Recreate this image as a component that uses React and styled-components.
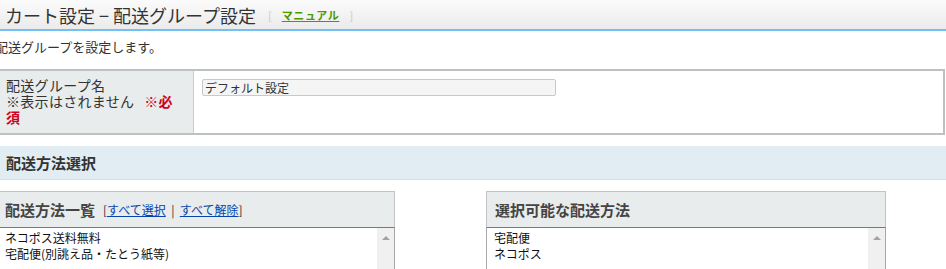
import React from "react";
import styled, { createGlobalStyle } from "styled-components";

const GlobalStyle = createGlobalStyle`
  html, body { margin: 0; padding: 0; background: #fff; overflow: hidden; }
  body { font-family: "Noto Sans CJK JP", "Noto Sans", sans-serif; color: #333; }
`;

const TitleBar = styled.div`
  height: 29px;
  border-bottom: 2px solid #72c0f4;
  background: linear-gradient(#fbfbfb, #ebebeb);
  display: flex;
  align-items: center;
  padding-left: 5px;
`;

const Title = styled.h1`
  margin: 0;
  font-size: 18px;
  font-weight: normal;
  color: #333;
  line-height: 22px;
  white-space: pre;
`;

const Manual = styled.span`
  margin-left: 12px;
  font-size: 11px;
  color: #c8c8c8;
  display: flex;
  align-items: center;
  gap: 10px;
  a {
    color: #4b9a00;
    font-weight: bold;
    text-decoration: underline;
    letter-spacing: 0.6px;
  }
`;

const Content = styled.div`
  margin-left: -5px;
  width: 951px;
`;

const Desc = styled.p`
  margin: 8px 0 14px;
  font-size: 13px;
  line-height: 16px;
`;

const FormTable = styled.div`
  width: 950px;
  box-sizing: border-box;
  border: 2px solid #bcc2c0;
  display: grid;
  grid-template-columns: 197px 1fr;
`;

const LabelCell = styled.div`
  box-sizing: border-box;
  background: #e8ecec;
  border-right: 1px solid #c6caca;
  padding: 6px 16px 8px 9px;
  font-size: 14px;
  line-height: 16px;
  letter-spacing: 0.3px;
  color: #333;
`;

const Required = styled.span`
  color: #d0001b;
  font-weight: bold;
  margin-left: 10px;
`;

const ValueCell = styled.div`
  padding: 8px 8px;
`;

const TextInput = styled.input`
  box-sizing: border-box;
  width: 354px;
  height: 17px;
  border: 1px solid #c9c9c9;
  border-radius: 2px;
  background: #f5f5f5;
  font-family: inherit;
  font-size: 12px;
  color: #333;
  padding: 0 2px;
  display: block;
  line-height: 15px;
`;

const SectionBand = styled.div`
  margin-top: 11px;
  height: 33px;
  background: #e1edf2;
  border-bottom: 1px solid #cfe0e6;
  display: flex;
  align-items: center;
  padding-left: 11px;
  font-size: 15px;
  font-weight: bold;
  color: #333;
`;

const Panels = styled.div`
  margin-top: 11px;
  display: grid;
  grid-template-columns: 400px 400px;
  column-gap: 91px;
`;

const Panel = styled.div`
  display: flex;
  flex-direction: column;
`;

const PanelHead = styled.div`
  height: 35px;
  background: #e8ecec;
  border: 1px solid #c0c4c4;
  border-bottom: none;
  display: flex;
  align-items: center;
  padding-left: ${(p) => p.$pad}px;
  gap: 8px;
`;

const PanelTitle = styled.span`
  font-size: 15px;
  font-weight: bold;
  color: #444;
`;

const Links = styled.span`
  font-size: 12px;
  color: #333;
  white-space: pre;
  a {
    color: #0645ad;
    text-decoration: underline;
  }
`;

const ListBox = styled.div`
  height: 80px;
  border: 1px solid #a8a8a8;
  border-top-color: #7a7a7a;
  display: flex;
  background: #fff;
`;

const Options = styled.div`
  flex: 1;
  padding: 2px 0 0 ${(p) => p.$pad}px;
  font-size: 12px;
  line-height: 16px;
  color: #111;
`;

const Scrollbar = styled.div`
  width: 17px;
  background: #f0f0f0;
  display: flex;
  justify-content: center;
  padding-top: 8px;
  box-sizing: border-box;
`;

const UpArrow = styled.div`
  width: 0;
  height: 0;
  border-left: 4px solid transparent;
  border-right: 4px solid transparent;
  border-bottom: 4px solid #a3a3a3;
`;

export default function App() {
  return (
    <>
      <GlobalStyle />
      <TitleBar>
        <Title>カート設定 − 配送グループ設定</Title>
        <Manual>
          [<a href="#">マニュアル</a>]
        </Manual>
      </TitleBar>
      <Content>
        <Desc>配送グループを設定します。</Desc>
        <FormTable>
          <LabelCell>
            配送グループ名
            <br />
            ※表示はされません<Required>※必須</Required>
          </LabelCell>
          <ValueCell>
            <TextInput defaultValue="デフォルト設定" />
          </ValueCell>
        </FormTable>
        <SectionBand>配送方法選択</SectionBand>
        <Panels>
          <Panel>
            <PanelHead $pad={9}>
              <PanelTitle>配送方法一覧</PanelTitle>
              <Links>
                [<a href="#">すべて選択</a>  |  <a href="#">すべて解除</a>]
              </Links>
            </PanelHead>
            <ListBox>
              <Options $pad={9}>
                <div>ネコポス送料無料</div>
                <div>宅配便(別誂え品・たとう紙等)</div>
              </Options>
              <Scrollbar>
                <UpArrow />
              </Scrollbar>
            </ListBox>
          </Panel>
          <Panel>
            <PanelHead $pad={8}>
              <PanelTitle>選択可能な配送方法</PanelTitle>
            </PanelHead>
            <ListBox>
              <Options $pad={7}>
                <div>宅配便</div>
                <div>ネコポス</div>
              </Options>
              <Scrollbar>
                <UpArrow />
              </Scrollbar>
            </ListBox>
          </Panel>
        </Panels>
      </Content>
    </>
  );
}
